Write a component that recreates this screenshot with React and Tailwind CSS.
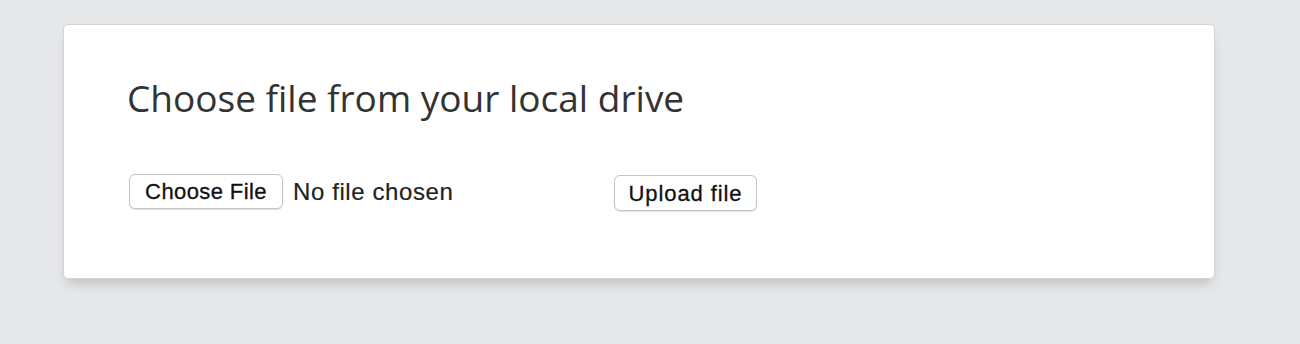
export default function App() {
  return (
    <div className="min-h-[344px] bg-[#e6e7e9] pt-6 pl-[63px] pr-[85px]">
      <div className="h-[255px] rounded-[5px] border border-[#d3d4d6] bg-white pl-[64px] pt-[48px] shadow-[0_8px_12px_-4px_rgba(0,0,0,0.18)]">
        <h1 className="-ml-px text-[37px] leading-[50px] text-[#333] font-['Open_Sans',sans-serif]">
          Choose file from your local drive
        </h1>
        <div className="mt-[51px] flex items-start font-['Liberation_Sans',Arial,sans-serif]">
          <button className="ml-px h-[35px] w-[154px] rounded-[6px] border border-[#c4c4c4] bg-white text-[22px] tracking-[0.4px] text-[#111] [-webkit-text-stroke:0.3px_#111] shadow-[0_1px_1px_rgba(0,0,0,0.12)]">
            Choose File
          </button>
          <span className="ml-[10px] w-[321px] text-[24px] leading-[35px] tracking-[0.6px] text-[#222] [-webkit-text-stroke:0.2px_#222]">
            No file chosen
          </span>
          <button className="mt-px h-[36px] w-[143px] rounded-[6px] border border-[#c4c4c4] bg-white text-[22px] tracking-[0.9px] text-[#111] [-webkit-text-stroke:0.3px_#111] shadow-[0_1px_1px_rgba(0,0,0,0.12)]">
            Upload file
          </button>
        </div>
      </div>
    </div>
  )
}
